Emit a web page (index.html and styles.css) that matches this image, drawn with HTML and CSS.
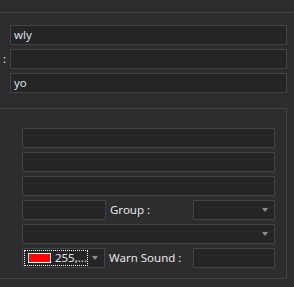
FILE: index.html
```html
<!DOCTYPE html>
<html lang="en">
<head>
    <meta charset="UTF-8">
    <title>Settings</title>
    <link rel="stylesheet" href="styles.css">
</head>
<body>
    <div class="top-rule"></div>

    <div class="fields">
        <div class="row"><span class="cut-label"></span><div class="text-box">wly</div></div>
        <div class="row"><span class="cut-label">:</span><div class="text-box"></div></div>
        <div class="row"><span class="cut-label"></span><div class="text-box">yo</div></div>
    </div>

    <div class="group-box">
        <div class="text-box"></div>
        <div class="text-box"></div>
        <div class="text-box"></div>
        <div class="pair-row">
            <div class="text-box small"></div>
            <span class="label">Group :</span>
            <div class="combo right-field"><span class="arrow"></span></div>
        </div>
        <div class="combo"><span class="arrow"></span></div>
        <div class="pair-row">
            <div class="combo color-combo">
                <div class="focus-rect">
                    <span class="swatch"></span>
                    <span class="color-text">255,...</span>
                </div>
                <span class="arrow"></span>
            </div>
            <span class="label">Warn Sound :</span>
            <div class="text-box right-field"></div>
        </div>
    </div>
</body>
</html>
```

FILE: styles.css
```css
body {
    margin: 0;
    background-color: #2d2d30;
    font-family: "Noto Sans", "DejaVu Sans", sans-serif;
    font-size: 11.5px;
    color: #e6e6e6;
    width: 294px;
    height: 287px;
    overflow: hidden;
}
.top-rule {
    height: 1px;
    margin-top: 12px;
    background-color: #434346;
}
.fields {
    display: flex;
    flex-direction: column;
    gap: 4px;
    margin-top: 12px;
    width: 287px;
}
.row {
    display: grid;
    grid-template-columns: 10px 1fr;
}
.cut-label {
    padding-left: 3px;
    line-height: 20px;
}
.text-box {
    box-sizing: border-box;
    height: 20px;
    border: 1px solid #434346;
    background-color: #252526;
    padding-left: 3px;
    line-height: 17px;
    color: #d4e0ee;
}
.group-box {
    box-sizing: border-box;
    display: flex;
    flex-direction: column;
    gap: 4px;
    width: 287px;
    margin-top: 15px;
    padding: 19px 11px 10px 22px;
    border: 1px solid #434346;
    border-left: none;
}
.pair-row {
    display: flex;
    align-items: center;
}
.small {
    width: 84px;
    flex: none;
}
.right-field {
    width: 82px;
    flex: none;
}
.label {
    flex: 1;
    padding-left: 4px;
    line-height: 20px;
    white-space: nowrap;
}
.combo {
    box-sizing: border-box;
    position: relative;
    height: 20px;
    border: 1px solid #434346;
    background-color: #252526;
}
.arrow {
    position: absolute;
    right: 6px;
    top: 7px;
    width: 0;
    height: 0;
    border-left: 3px solid transparent;
    border-right: 3px solid transparent;
    border-top: 4px solid #8a8a8e;
}
.color-combo {
    width: 83px;
    flex: none;
}
.focus-rect {
    box-sizing: border-box;
    display: flex;
    align-items: center;
    width: 64px;
    height: 16px;
    margin: 1px 0 0 1px;
    border: 1px dotted #ffffff;
}
.swatch {
    box-sizing: border-box;
    width: 23px;
    height: 10px;
    margin-left: 3px;
    border: 1px solid #ffffff;
    background-color: #ff0000;
}
.color-text {
    margin-left: 4px;
    line-height: 14px;
    color: #e6e6e6;
}
```
